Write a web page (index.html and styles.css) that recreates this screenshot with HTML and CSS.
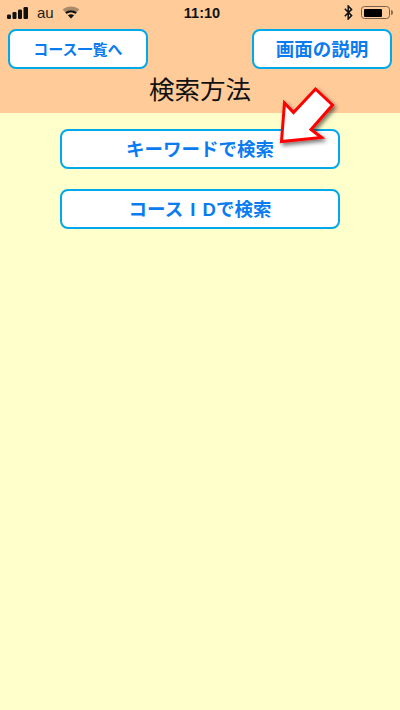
FILE: index.html
```html
<!DOCTYPE html>
<html lang="ja">
<head>
<meta charset="utf-8">
<title>検索方法</title>
<link rel="stylesheet" href="styles.css">
</head>
<body>
<div class="screen">
  <header class="header">
    <div class="status">
      <div class="status-left">
        <svg class="signal" width="22" height="12" viewBox="0 0 22 12"><rect x="0" y="7.5" width="4" height="4.5" rx="1.2"/><rect x="5.5" y="5" width="4" height="7" rx="1.2"/><rect x="11" y="2.5" width="4" height="9.5" rx="1.2"/><rect x="16.5" y="0" width="4.5" height="12" rx="1.2"/></svg>
        <span class="carrier">au</span>
        <svg class="wifi" width="18" height="13" viewBox="0 0 18 13"><path d="M9 12.6L0.6 3.6C5.3 -0.4 12.7 -0.4 17.4 3.6Z" fill="#a98a6a"/><path d="M9 12.6L3.4 6.5C6.6 3.9 11.4 3.9 14.6 6.5Z" fill="#ffcc99"/><path d="M3.2 6.3C6.5 3.4 11.5 3.4 14.8 6.3L13.3 7.9C10.9 5.9 7.1 5.9 4.7 7.9Z" fill="#111"/><path d="M9 12.6L5.9 9.2C7.7 7.8 10.3 7.8 12.1 9.2Z" fill="#111"/></svg>
      </div>
      <div class="clock">11:10</div>
      <div class="status-right">
        <svg class="bt" width="9" height="15" viewBox="0 0 9 15"><path d="M0.8 3.8L7.6 10.6L4.2 14V1L7.6 4.4L0.8 11.2" fill="none" stroke="#111" stroke-width="1.5"/></svg>
        <div class="battery"><div class="battery-fill"></div></div>
        <div class="battery-cap"></div>
      </div>
    </div>
    <div class="nav">
      <button class="btn btn-small">コース一覧へ</button>
      <button class="btn btn-help">画面の説明</button>
    </div>
    <h1 class="title">検索方法</h1>
  </header>
  <main class="content">
    <button class="btn btn-wide">キーワードで検索</button>
    <button class="btn btn-wide btn-latin">コース I Dで検索</button>
  </main>
  <svg class="arrow" width="70" height="75" viewBox="270 80 70 75"><defs><filter id="s" x="-20%" y="-20%" width="150%" height="150%"><feDropShadow dx="2" dy="2.5" stdDeviation="2" flood-color="#000" flood-opacity="0.55"/></filter></defs><path d="M281.5 141.5L284.5 103L293.5 112.5L315.5 89L332.5 105L311 129.5L321.5 137.5Z" fill="#fff" stroke="#f00" stroke-width="3" stroke-linejoin="miter" filter="url(#s)"/></svg>
</div>
</body>
</html>
```
FILE: styles.css
```css
* { box-sizing: border-box; }
html, body { margin: 0; padding: 0; }
body { font-family: "Noto Sans CJK JP", "Liberation Sans", sans-serif; }
.screen { position: relative; width: 400px; height: 710px; background: #ffffcc; overflow: hidden; }
.header { height: 113px; background: #ffcc99; display: flex; flex-direction: column; }
.status { padding: 1px 7px 0 7px; display: grid; grid-template-columns: 1fr auto 1fr; align-items: center; height: 24px; margin-bottom: 5px; }
.status-left { display: flex; align-items: center; gap: 8px; }
.signal { fill: #111; flex: none; }
.carrier { font: 15px/16px "Liberation Sans", sans-serif; color: #222; }
.wifi { margin-left: 0; margin-top: -1px; }
.clock { font: 700 14.5px/16px "Liberation Sans", sans-serif; color: #111; padding-left: 4px; }
.status-right { display: flex; align-items: center; justify-content: flex-end; }
.bt { margin-right: 8px; }
.battery { width: 29px; height: 13px; border: 1.5px solid #7a6048; border-radius: 3.5px; padding: 1.5px; }
.battery-fill { width: 18px; height: 100%; background: #000; border-radius: 1px; }
.battery-cap { width: 2px; height: 5px; background: #8a7058; border-radius: 0 2px 2px 0; margin-left: 1px; }
.nav { display: flex; justify-content: space-between; padding: 0 8px; }
.btn { display: block; background: #fff; border: 2.5px solid #00a8ec; border-radius: 8px; color: #0a7cf0; font-family: "Noto Sans CJK JP", sans-serif; font-weight: 700; padding: 0 0 2px; height: 40px; width: 140px; text-align: center; }
.btn-small { font-size: 15px; }
.btn-help { font-size: 18.5px; }
.title { margin: 0; font-size: 25.5px; font-weight: 400; line-height: 38px; text-align: center; color: #111; }
.content { display: flex; flex-direction: column; align-items: center; gap: 20px; padding-top: 16px; }
.btn-wide { width: 280px; font-size: 18.5px; }
.btn-latin { font-family: "Liberation Sans", "Noto Sans CJK JP", sans-serif; word-spacing: 2px; }
.arrow { position: absolute; left: 270px; top: 80px; }
```
